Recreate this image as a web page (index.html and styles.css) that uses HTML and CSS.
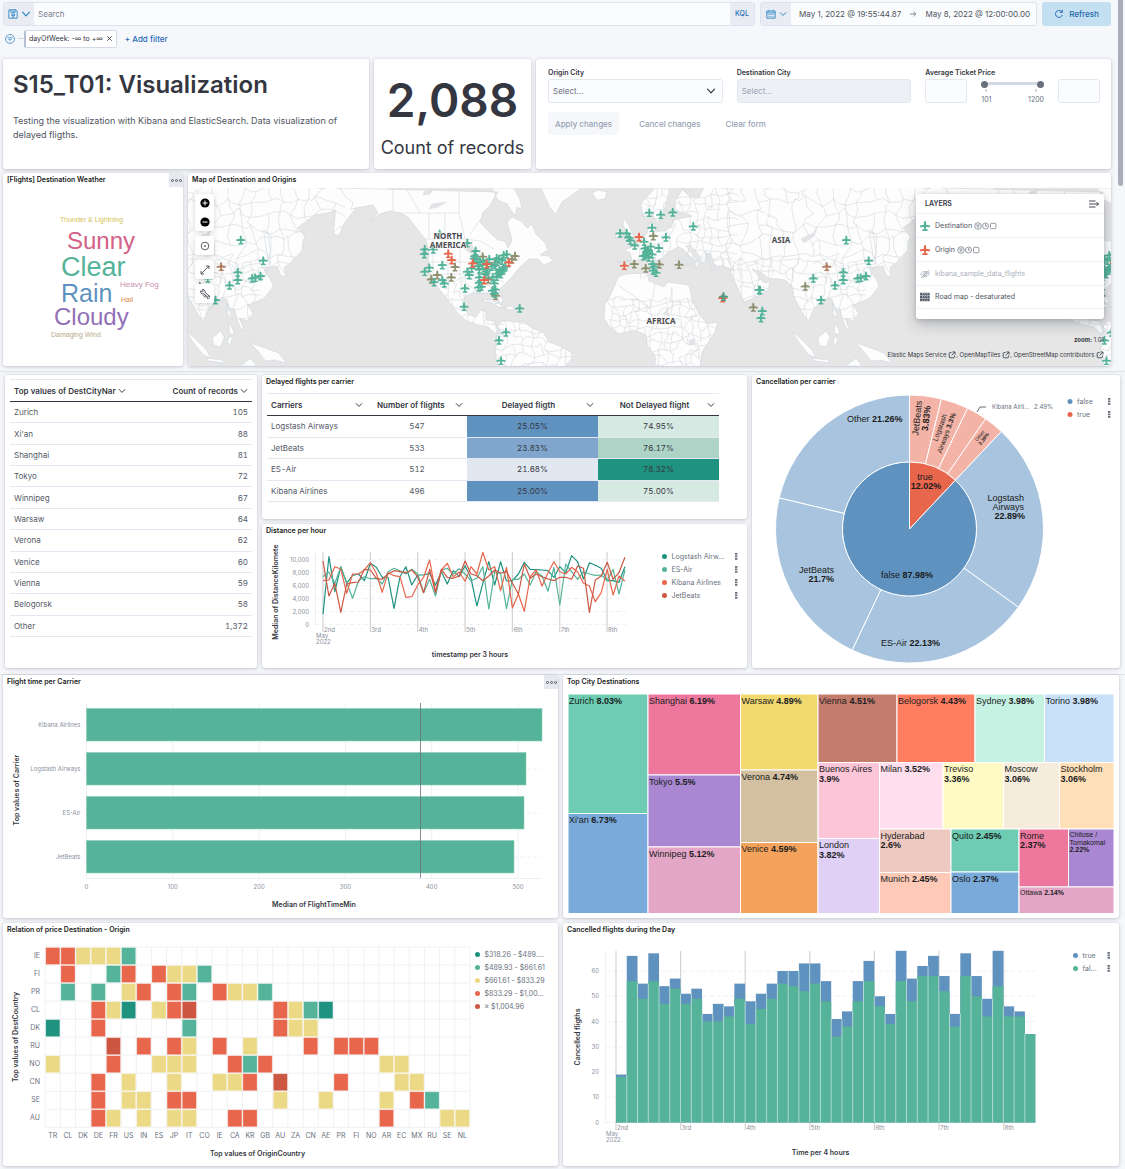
FILE: index.html
```
<!DOCTYPE html>
<html lang="en">
<head>
<meta charset="utf-8">
<meta name="viewport" content="width=device-width, initial-scale=1">
<title>S15_T01: Visualization</title>
<link rel="stylesheet" href="styles.css">
</head>
<body>
<svg class="defs" aria-hidden="true">
  <defs>
    <symbol id="chev" viewBox="0 0 10 10"><path d="M1.500 3.200 5 6.800l3.500-3.600" fill="none" stroke="currentColor" stroke-width="1.200" stroke-linecap="round" stroke-linejoin="round"/></symbol>
    <symbol id="plane" viewBox="-4.500 -4.500 9 9" overflow="visible"><path d="M0-4.500C.8-4.500 1-3.600 1-2.800V-1.200L4.500-.4V1.100L1 .9.7 2.600 2.400 3.200V4.400H-2.400V3.200L-.7 2.600-1 .9-4.500 1.100V-.4L-1-1.200V-2.800C-1-3.600-.8-4.500 0-4.500z"/></symbol>
    <symbol id="ext" viewBox="0 0 10 10"><path d="M4.500 2H2.500a1 1 0 0 0-1 1v4.500a1 1 0 0 0 1 1H7a1 1 0 0 0 1-1V5.500M5.500 1.200h3.300v3.300M8.500 1.500 4.500 5.500" fill="none" stroke="currentColor"/></symbol>
    <symbol id="marks" viewBox="0 0 23 8"><g fill="none" stroke="currentColor" stroke-width=".7"><circle cx="4" cy="4" r="3.300"/><path d="M2.200 3h3.600M2.700 4.200h2.600M3.400 5.400h1.200"/><circle cx="11.500" cy="4" r="3"/><path d="M11.500 2v2.200h1.700"/><rect x="16.500" y="1.300" width="5.400" height="5.400" rx="1"/></g></symbol>
  </defs>
</svg>
<div class="scroll-thumb"></div>

<header class="query-bar">
  <form class="search">
    <button type="button" class="addon" aria-label="Saved queries">
      <svg class="i10" viewBox="0 0 12 12"><path d="M1 1h8.500L11 2.500V11H1zM3.500 1v3h5V1M6.500 1.800v1.400M4.500 6h3.500v2H4.500zM6.200 8v3" fill="none" stroke="currentColor" stroke-width="1.100"/></svg>
      <svg class="i10"><use href="#chev"/></svg>
    </button>
    <input type="text" placeholder="Search" aria-label="Search">
    <button type="button" class="kql">KQL</button>
  </form>
  <div class="dates">
    <button type="button" class="addon" aria-label="Date quick select">
      <svg class="i10" viewBox="0 0 12 12"><path d="M1 2.500h10V11H1zM1 4.700h10M3.500 1v2M8.500 1v2M3 6.600h1.200M5.400 6.600h1.200M7.800 6.600H9M3 8.800h1.200M5.400 8.800h1.200M7.800 8.800H9" fill="none" stroke="currentColor" stroke-width="1.100"/></svg>
      <svg class="i8"><use href="#chev"/></svg>
    </button>
    <button type="button" class="date">May 1, 2022 @ 19:55:44.87</button>
    <svg class="i8 muted" viewBox="0 0 10 10"><path d="M1 5h7.500M5.500 2.200 8.500 5l-3 2.800" fill="none" stroke="currentColor"/></svg>
    <button type="button" class="date">May 8, 2022 @ 12:00:00.00</button>
  </div>
  <button type="button" class="refresh">
    <svg class="i10" viewBox="0 0 12 12"><path d="M10 7.200A4.200 4.200 0 1 1 8.700 2.700L10 4M10 1v3H7" fill="none" stroke="currentColor" stroke-width="1.100"/></svg>
    Refresh
  </button>
</header>
<div class="filters">
  <svg class="i10 blue" viewBox="0 0 12 12"><g fill="none" stroke="currentColor"><circle cx="6" cy="6" r="5.300"/><path d="M2.800 4.500h6.400M4 6.400h4M5.200 8.300h1.600"/></g></svg>
  <span class="dash"></span>
  <span class="pill">dayOfWeek: -∞ to +∞ <button type="button" aria-label="Remove filter"><svg class="i6" viewBox="0 0 8 8"><path d="m1.500 1.500 5 5m0-5-5 5" fill="none" stroke="currentColor"/></svg></button></span>
  <a href="#" class="add">+ Add filter</a>
</div>

<main>
  <section class="row row-intro">
    <article class="panel intro">
      <h1>S15_T01: Visualization</h1>
      <p>Testing the visualization with Kibana and ElasticSearch. Data visualization of delayed fligths.</p>
    </article>
    <article class="panel metric">
      <strong>2,088</strong>
      <span>Count of records</span>
    </article>
    <form class="panel controls">
      <div class="fields">
        <div class="field">
          <label for="origin">Origin City</label>
          <div class="select-wrap"><select id="origin"><option>Select...</option></select><svg class="i10"><use href="#chev"/></svg></div>
        </div>
        <div class="field">
          <label for="dest">Destination City</label>
          <select id="dest" disabled><option>Select...</option></select>
        </div>
        <div class="field">
          <label for="min-price">Average Ticket Price</label>
          <div class="range">
            <input type="text" id="min-price">
            <div class="slider">
              <div class="track"><input type="range" min="101" max="1200" value="101" aria-label="Lowest price"><input type="range" min="101" max="1200" value="1200" aria-label="Highest price"></div>
              <div class="ticks"><span>101</span><span>1200</span></div>
            </div>
            <input type="text" aria-label="Maximum price">
          </div>
        </div>
      </div>
      <div class="actions">
        <button type="button" class="apply" disabled>Apply changes</button>
        <button type="button" disabled>Cancel changes</button>
        <button type="button" disabled>Clear form</button>
      </div>
    </form>
  </section>

  <section class="row row-map">
    <article class="panel">
      <header><h2>[Flights] Destination Weather</h2><button type="button" class="opts" aria-label="Panel options"><i></i><i></i><i></i></button></header>
      <svg class="chart cloud" viewBox="3 188 180 177">
        <text x="60" y="222" font-size="7" fill="#d6bf57">Thunder &amp; Lightning</text>
        <text x="67" y="249" font-size="24" fill="#d36086">Sunny</text>
        <text x="61" y="276" font-size="27" fill="#54b399">Clear</text>
        <text x="61" y="302" font-size="25" fill="#6092c0">Rain</text>
        <text x="120" y="287" font-size="8" fill="#ca8eae">Heavy Fog</text>
        <text x="121" y="302" font-size="7" fill="#da8b45">Hail</text>
        <text x="54" y="325" font-size="24" fill="#9170b8">Cloudy</text>
        <text x="51" y="337" font-size="7" fill="#b9a888">Damaging Wind</text>
      </svg>
    </article>
    <article class="panel map-panel">
      <header><h2>Map of Destination and Origins</h2></header>
      <div class="map">
        <svg class="chart" id="map" viewBox="188 188 923 178"></svg>
        <div class="tools">
          <div class="tool zoom">
            <button type="button" aria-label="Zoom in"><svg class="i10" viewBox="0 0 10 10"><circle cx="5" cy="5" r="4.600"/><path d="M5 2.500v5M2.500 5h5" stroke="#fff"/></svg></button>
            <button type="button" aria-label="Zoom out"><svg class="i10" viewBox="0 0 10 10"><circle cx="5" cy="5" r="4.600"/><path d="M2.500 5h5" stroke="#fff"/></svg></button>
          </div>
          <button type="button" class="tool" aria-label="Fit to data"><svg class="i10" viewBox="0 0 10 10"><circle cx="5" cy="5" r="3.800" fill="none" stroke="currentColor" stroke-width=".8"/><circle cx="5" cy="5" r=".8"/></svg></button>
          <button type="button" class="tool" aria-label="Measure"><svg class="i10" viewBox="0 0 10 10"><path d="M1 9 9 1M6 1h3v3M1 6v3h3" fill="none" stroke="currentColor" stroke-width=".8"/></svg></button>
          <button type="button" class="tool" aria-label="Tools"><svg class="i10" viewBox="0 0 10 10"><path d="M.8 1.800 2.300 3 3.300 2 2.200.6A2.200 2.200 0 0 1 5 3.400L8.300 6.300A1 1 0 0 1 7 7.800L4 4.600A2.200 2.200 0 0 1 .8 1.800zM3 6.200 5.500 8.800M4.500 5.500 7 8.500M8.300 6.300A1.700 1.700 0 1 1 7 9.300" fill="none" stroke="currentColor" stroke-width=".8"/></svg></button>
        </div>
        <aside class="layers">
          <h3>LAYERS <svg class="i10" viewBox="0 0 10 10"><path d="M0 2h6.500M0 5h9.500M0 8h6.500M7.500 3l2 2-2 2" fill="none" stroke="currentColor" stroke-width=".9"/></svg></h3>
          <ul>
            <li><svg class="i10 green"><use href="#plane"/></svg>Destination <svg class="marks"><use href="#marks"/></svg></li>
            <li><svg class="i10 red"><use href="#plane"/></svg>Origin <svg class="marks"><use href="#marks"/></svg></li>
            <li class="off"><svg class="i10" viewBox="0 0 10 10"><path d="M.5 5C2.500 1.500 7.500 1.500 9.500 5 7.500 8.500 2.500 8.500.5 5zM1 9 9 1M2.500 9.200 9.500 2.500" fill="none" stroke="currentColor" stroke-width=".8"/><circle cx="5" cy="5" r="1.500" fill="none" stroke="currentColor" stroke-width=".8"/></svg>kibana_sample_data_flights</li>
            <li><svg class="i10" viewBox="0 0 10 10"><path d="M0 .8h9.600v8.400H0z" fill="#535966"/><path d="M0 3.500h10M0 6.400h10M2.400 1v8M4.800 1v8M7.200 1v8" stroke="#d5d8de" stroke-width=".8" stroke-dasharray="1.600 .8"/></svg>Road map - desaturated</li>
          </ul>
        </aside>
        <div class="credits">
          <div><b>zoom:</b> 1.01</div>
          <div><a href="#">Elastic Maps Service <svg class="i8"><use href="#ext"/></svg></a>, <a href="#">OpenMapTiles <svg class="i8"><use href="#ext"/></svg></a>, <a href="#">OpenStreetMap contributors <svg class="i8"><use href="#ext"/></svg></a></div>
        </div>
      </div>
    </article>
  </section>

  <section class="row row-tables">
    <article class="panel cities">
      <table class="grid">
        <thead><tr><th>Top values of DestCityNar <svg class="i8"><use href="#chev"/></svg></th><th>Count of records <svg class="i8"><use href="#chev"/></svg></th></tr></thead>
        <tbody>
          <tr><td>Zurich</td><td>105</td></tr>
          <tr><td>Xi'an</td><td>88</td></tr>
          <tr><td>Shanghai</td><td>81</td></tr>
          <tr><td>Tokyo</td><td>72</td></tr>
          <tr><td>Winnipeg</td><td>67</td></tr>
          <tr><td>Warsaw</td><td>64</td></tr>
          <tr><td>Verona</td><td>62</td></tr>
          <tr><td>Venice</td><td>60</td></tr>
          <tr><td>Vienna</td><td>59</td></tr>
          <tr><td>Belogorsk</td><td>58</td></tr>
          <tr><td>Other</td><td>1,372</td></tr>
        </tbody>
      </table>
    </article>
    <div class="stack">
      <article class="panel">
        <header><h2>Delayed flights per carrier</h2></header>
        <table class="grid delays">
          <colgroup><col class="c1"><col class="c2"><col class="c3"><col class="c4"></colgroup>
          <thead><tr><th><span>Carriers<svg class="i8"><use href="#chev"/></svg></span></th><th><span>Number of flights<svg class="i8"><use href="#chev"/></svg></span></th><th><span>Delayed fligth<svg class="i8"><use href="#chev"/></svg></span></th><th><span>Not Delayed flight<svg class="i8"><use href="#chev"/></svg></span></th></tr></thead>
          <tbody>
            <tr><td>Logstash Airways</td><td>547</td><td class="b3">25.05%</td><td class="g1">74.95%</td></tr>
            <tr><td>JetBeats</td><td>533</td><td class="b2">23.83%</td><td class="g2">76.17%</td></tr>
            <tr><td>ES-Air</td><td>512</td><td class="b1">21.68%</td><td class="g3">78.32%</td></tr>
            <tr><td>Kibana Airlines</td><td>496</td><td class="b3">25.00%</td><td class="g1">75.00%</td></tr>
          </tbody>
        </table>
      </article>
      <article class="panel">
        <header><h2>Distance per hour</h2></header>
        <svg class="chart" id="distance" viewBox="262 539 485 129"></svg>
      </article>
    </div>
    <article class="panel">
      <header><h2>Cancellation per carrier</h2></header>
      <svg class="chart" id="sunburst" viewBox="752 390 368 278"></svg>
    </article>
  </section>

  <section class="row row-charts">
    <article class="panel">
      <header><h2>Flight time per Carrier</h2><button type="button" class="opts" aria-label="Panel options"><i></i><i></i><i></i></button></header>
      <svg class="chart" id="flight-time" viewBox="3 690 555 228"></svg>
    </article>
    <article class="panel">
      <header><h2>Top City Destinations</h2></header>
      <svg class="chart" id="treemap" viewBox="563 690 556 228"></svg>
    </article>
    <article class="panel">
      <header><h2>Relation of price Destination - Origin</h2></header>
      <svg class="chart" id="heatmap" viewBox="3 938 555 228"></svg>
    </article>
    <article class="panel">
      <header><h2>Cancelled flights during the Day</h2></header>
      <svg class="chart" id="cancelled" viewBox="563 938 556 228"></svg>
    </article>
  </section>
</main>
<script src="charts.js"></script>
</body>
</html>
```
FILE: styles.css
```
* { box-sizing: border-box; }

body {
  margin: 0;
  background: #f6f7fb;
  color: #343741;
  font: 8px/12px Inter, "Liberation Sans", sans-serif;
}

h1, h2, h3, p, ul { margin: 0; padding: 0; }
button, input, select { font: inherit; color: inherit; margin: 0; }
button { border: 0; background: none; padding: 0; }
a { color: inherit; text-decoration: none; }
svg { display: block; flex: none; }

.defs { position: absolute; width: 0; height: 0; }
.i10 { width: 10px; height: 10px; }
.i8 { width: 8px; height: 8px; }
.i6 { width: 7px; height: 7px; }
.blue { color: #3d8fcb; }
.muted { color: #69707d; }
.green { fill: #54b399; }
.red { fill: #e7664c; }

.scroll-thumb {
  position: absolute;
  z-index: 5;
  top: 0;
  right: 2px;
  width: 5px;
  height: 186px;
  border-radius: 0 0 3px 3px;
  background: #a9aeb9;
}

/* query bar */
.query-bar {
  display: flex;
  gap: 5px;
  padding: 2px 14px 0 3px;
}
.search, .dates {
  display: flex;
  align-items: center;
  height: 24px;
  border: 1px solid #dde2ec;
  border-radius: 3px;
  background: #fbfcfe;
  overflow: hidden;
}
.search { flex: 1; }
.search input {
  flex: 1;
  height: 100%;
  border: 0;
  padding: 0 4px;
  background: none;
}
.search input::placeholder { color: #7b818d; opacity: 1; }
.addon, .kql {
  display: flex;
  align-items: center;
  justify-content: center;
  gap: 3px;
  height: 100%;
  background: #e9edf3;
  color: #2f86c6;
}
.addon { width: 30px; }
.kql { width: 24px; color: #2a6fb5; font-size: 7px; font-weight: 500; }
.dates { width: 277px; justify-content: space-between; padding-right: 6px; }
.date { color: #50545e; }
.refresh {
  display: flex;
  align-items: center;
  justify-content: center;
  gap: 5px;
  width: 69px;
  height: 24px;
  border-radius: 3px;
  background: #c5dff2;
  color: #2066a8;
  font-weight: 500;
}
.filters {
  display: flex;
  align-items: center;
  height: 33px;
  padding: 0 0 8px 5px;
}
.dash { width: 6px; height: 1px; margin-left: 3px; background: #d3dae6; }
.pill {
  display: flex;
  align-items: center;
  gap: 3px;
  height: 18px;
  padding: 0 3px;
  border: 1px solid #d3dae6;
  border-left: 2px solid #b5bdd0;
  border-radius: 2px;
  background: #fff;
  font-size: 7px;
  white-space: nowrap;
}
.add { margin-left: 8px; color: #1f69b3; font-weight: 500; }

/* dashboard */
.row { display: grid; gap: 5px; }
.row-intro { grid-template-columns: 366fr 157fr 575fr; padding: 0 14px 4px 3px; }
.row-map { grid-template-columns: 180fr 923fr; padding: 0 14px 5px 3px; }
.row-tables { grid-template-columns: 252fr 485fr 368fr; padding: 3px 5px 6px; border-top: 1px solid #dfe3eb; }
.row-charts { grid-template-columns: 555fr 556fr; padding: 0 6px 3px 3px; border-top: 1px solid #dfe3eb; }
.stack { display: grid; grid-template-rows: 1fr 1fr; gap: 5px; }
.panel {
  min-width: 0;
  border-radius: 3px;
  background: #fff;
  box-shadow: 0 1px 3px rgba(60, 65, 80, .2), 0 0 5px rgba(60, 65, 80, .12);
  overflow: hidden;
}
.panel > header {
  display: flex;
  justify-content: space-between;
  align-items: flex-start;
  height: 15px;
  padding-left: 4px;
}
h2 { color: #1a1c21; font-size: 7px; line-height: 14px; font-weight: 600; }
.opts {
  display: flex;
  align-items: center;
  justify-content: center;
  gap: 1px;
  width: 14px;
  height: 14px;
  background: #e6e8ed;
}
.opts i { width: 3px; height: 3px; border: 1px solid #535966; border-radius: 50%; }
.chart { width: 100%; height: auto; }

.intro { min-height: 110px; padding: 10px; }
h1 { font-size: 24px; line-height: 31px; font-weight: 600; }
.intro p { margin-top: 14px; color: #50545e; font-size: 9px; line-height: 14px; }
.metric {
  display: flex;
  flex-direction: column;
  align-items: center;
  padding-top: 15px;
  white-space: nowrap;
}
.metric strong { font-size: 46px; line-height: 52px; font-weight: 600; }
.metric span { margin-top: 10px; font-size: 18px; line-height: 24px; }

.controls { padding: 8px 11px 8px 12px; }
.fields { display: grid; grid-template-columns: repeat(3, 1fr); gap: 14px; }
.field label { display: block; color: #343741; font-size: 7px; font-weight: 600; line-height: 12px; }
.field select, .range > input {
  width: 100%;
  height: 24px;
  border: 1px solid #e3e8f0;
  border-radius: 3px;
  padding: 0 4px;
  background: #fbfcfe;
  color: #69707d;
  appearance: none;
}
.field select:disabled { background: #edf0f5; color: #98a2b3; opacity: 1; }
.select-wrap { display: grid; align-items: center; }
.select-wrap > * { grid-area: 1 / 1; }
.select-wrap svg { justify-self: end; margin-right: 7px; pointer-events: none; }
.range { display: grid; grid-template-columns: 42px 1fr 42px; gap: 14px; }
.slider { padding-top: 2px; }
.track { position: relative; height: 6px; }
.track::before { content: ""; position: absolute; left: 7px; right: 7px; top: 1px; height: 3px; background: #d3dae6; }
.track input {
  position: absolute;
  inset: 0;
  width: 100%;
  height: 6px;
  appearance: none;
  background: none;
  pointer-events: none;
}
.track input::-webkit-slider-thumb {
  appearance: none;
  width: 7px;
  height: 7px;
  border-radius: 50%;
  background: #69707d;
  pointer-events: auto;
}
.ticks { display: flex; justify-content: space-between; margin-top: 2px; color: #69707d; font-size: 7px; line-height: 10px; }
.ticks span { display: flex; flex-direction: column; align-items: center; }
.ticks span::before { content: ""; width: 2px; height: 3px; margin-bottom: 3px; background: #d3dae6; }
.actions { display: flex; align-items: center; margin-top: 7px; color: #98a2b3; }
.actions button { height: 23px; padding: 0 5px; margin-right: 15px; border-radius: 3px; font-weight: 500; }
.actions .apply { padding: 0 7px; background: #f5f7fa; }

/* word cloud */
.cloud text { font-family: "Liberation Sans", Arial, sans-serif; }

/* map overlays */
.map { position: relative; }
.map text { font-family: "Noto Sans", sans-serif; font-weight: 700; font-size: 8px; fill: #4a4a50; stroke: #fff; stroke-width: 1; paint-order: stroke; text-anchor: middle; }
.tools { position: absolute; left: 7px; top: 6px; display: flex; flex-direction: column; gap: 5px; }
.tool {
  display: flex;
  align-items: center;
  justify-content: center;
  width: 19px;
  height: 19px;
  border-radius: 3px;
  background: #fff;
  box-shadow: 0 1px 5px rgba(60, 65, 80, .22);
}
.zoom { flex-direction: column; gap: 9px; height: 37px; }
.layers {
  position: absolute;
  right: 7px;
  top: 6px;
  width: 188px;
  padding-bottom: 10px;
  border-radius: 3px;
  background: #fff;
  box-shadow: 0 5px 14px rgba(60, 65, 80, .3), 0 1px 4px rgba(60, 65, 80, .2);
}
.layers h3 {
  display: flex;
  justify-content: space-between;
  align-items: center;
  height: 19px;
  padding: 0 5px 0 9px;
  font-size: 7px;
  font-weight: 600;
}
.layers ul { list-style: none; }
.layers li {
  display: flex;
  align-items: center;
  gap: 4px;
  height: 24px;
  padding-left: 4px;
  border-top: 1px solid #f0f2f6;
  color: #50545e;
  font-size: 7px;
}
.layers li:last-child { border-bottom: 1px solid #f0f2f6; }
.layers li > svg:first-child { margin-right: 1px; }
.layers .off { color: #abb1bd; }
.layers .marks { width: 23px; height: 8px; color: #69707d; margin-left: -2px; }
.credits {
  position: absolute;
  right: 7px;
  bottom: 4px;
  color: #343741;
  font-size: 6px;
  line-height: 15px;
  text-align: right;
}
.credits svg { display: inline-block; vertical-align: -2px; }

/* tables */
.grid { border-collapse: collapse; color: #535966; table-layout: fixed; font-variant-numeric: tabular-nums; }
.grid th, .grid td { padding: 0 4px; border-bottom: 1px solid #e3e8f2; font-size: 8px; }
.grid th { border-top: 1px solid #e3e8f2; border-bottom: 1px solid #343741; color: #343741; font-weight: 600; text-align: left; white-space: nowrap; }
.grid th svg { display: inline-block; vertical-align: -1px; }
.cities { padding: 4px 5px 0; }
.cities table { width: 100%; height: 258px; }
.cities th { height: 22px; }
.cities tr > :last-child { text-align: right; }
.delays { width: 452px; max-width: 100%; height: 109px; margin: 3px 0 0 5px; }
.delays th span { display: flex; align-items: center; justify-content: space-between; }
.delays th { height: 22px; }
.delays th:nth-child(n+3) span::before { content: ""; }
.delays th, .delays td:nth-child(n+2) { text-align: center; }
.delays th:nth-child(2) { padding-left: 10px; }
.delays td:nth-child(n+3) { color: #343741; }
.c1, .c2 { width: 100px; }
.c3 { width: 131px; }
.c4 { width: 121px; }
.b1 { background: #e1e8f2; }
.b2 { background: #81a6cd; }
.b3 { background: #6092c0; }
.g1 { background: #d7e9e3; }
.g2 { background: #aed4c8; }
.g3 { background: #209280; }

/* chart text */
.chart { font-family: Inter, sans-serif; }
.tick { fill: #8a909c; font-size: 6px; }
.label { fill: #69707d; font-size: 7px; }
.axis { fill: #343741; font-size: 7px; font-weight: 600; }
.mid { text-anchor: middle; }
.end { text-anchor: end; }
.slice { font-family: "Liberation Sans", Arial, sans-serif; font-size: 9px; fill: #1a1c21; }
.slice .b { font-weight: 700; }
.small { font-size: 7px; }
.tiny { font-size: 6px; }
.turned { text-anchor: end; }
.turned.s7 { font-size: 7px; }
.turned.s5 { font-size: 5px; }
```
FILE: charts.js
```
const put = (id, parts) => { document.getElementById(id).innerHTML = parts.join(''); };
const text = (x, y, s, cls, extra = '') => `<text x="${x}" y="${y}" class="${cls}" ${extra}>${s}</text>`;
const rect = (x, y, w, h, fill, extra = '') => `<rect x="${x}" y="${y}" width="${w}" height="${h}" fill="${fill}" ${extra}/>`;
const line = (x1, y1, x2, y2, stroke, extra = '') => `<line x1="${x1}" y1="${y1}" x2="${x2}" y2="${y2}" stroke="${stroke}" ${extra}/>`;
const side = (x, y, s) => text(0, 0, s, 'axis mid', `transform="translate(${x} ${y}) rotate(-90)"`);
const menuDots = (x, y) => [-2.5, 0, 2.5].map(d => rect(x - 1, y + d - 1, 2.4, 1.8, '#69707d')).join('');
const legend = (x, y, step, items, menuX) => items.map(([name, color], i) =>
  `<circle cx="${x}" cy="${y + i * step}" r="2.500" fill="${color}"/>` +
  text(x + 7, y + i * step + 2, name, 'label') + (menuX ? menuDots(menuX, y + i * step) : '')).join('');

/* world map */
const land = [
  'M340 188l5 8 8 7-2 6 10-2 12-2 5 8-8 8 10-7 10-3 10 2 8 4 10 13 8 10 3 12-1 14 4 11 7 12 9 11 8 11 0 0 9 9 9 4 14 3 7 6 9 2 -8-9-1-5-9-1 0-8-5-2-5 7-7-2-5-7 0-11 8-4 14 0 8 0 7 12 2-4-4-11 12-12 8-10 10-9 9 0 6 6 9-4-4-5-9-1 8-5-3-7-9-9-4-10-5 4-6-7-9-4-5 5 3 10 2 9-4 7-3-7-7-1-10-9-8-9 3-10 7-6 5-10 3-4z',
  'M492 188h22l6 12 2 10-5-3-2 9-8-12-9-4z',
  'M541 188l9 20 6 6 6-12 14-10 6-4z',
  'M592 193l6-3 9 2-2 7-8 1z',
  'M498 325l6-5 10 2 10 0 8 6 12 5 5 9 13 5 9 5 1 6-5 6-3 5h-64l-4-11-1-9 2-11z',
  'M481 301l7-2 10 4 7 4-6 0-8-4zM505 307l6-1 4 3-6 1z',
  'M624 218l4 6 4 8 2 6-9 2 2-8-4-7zM617 230l5 1-1 6-6 1z',
  'M615 285l3-8 8-3 21-1 2 8 15 6 4-5 20 3 2 3 2 12 6 12 9 12 11-2-3 10-13 20-2 16h-46l2-10-9-13-1-10-12-5-15 4-10-8-5-8 1-14 6-10z',
  'M641 203l14-15h15l-4 16-3 10-5 9-3-3-3-6-9 3z',
  'M617 262l11-1 4-1-2-7-5-3 9-4 6-5 7-8 2-10 5 0 1 8 10 0 7-5 1-6 19-4-10-3-7-4 0-8 7-12 8 8 9 0 5-10h292l-2 2-17 7-14 10-13 17-6 13-5-3 2-23-8 3-13 2-17 13 7 8-2 14-12 13-6 4 1 10-5-2-3-9-14 2 5 7 5 11-9 12-9 4-8 3 6 9-6 7-8-3 5 13-4-3-4-10-2-9-5-1-3-9-5-1-7 4-8 10-3 10-7-10-8-15-3-12-6-5-17-2-7-6-9-3 6 6 5 7 7 1-2 7-12 7-12 5-10-22-5-12-12-2-8-5-4-10 1 9-4 4-4-10-8-9-4 1 7 9 6 7-3 6-3-9-10-10-5-2-12 7-6 6-9 1-7-1z',
  'M869 230l4 2 3 20-2 8-2-10zM865 262l8-3 3 4-7 3zM864 268l8-1 0 8-10 7-8 1 2-4 8-3z',
  'M792 332l6 4 14 14 4 8-7-3-9-11zM818 338l8-7 4 6-4 10-7-2zM812 358l16 2 2 3-16-2zM834 322l4 6 2 6-5 0zM832 303l3 7 3 8-5-4zM834 338l4-2-2 9-3-2zM856 343l12 4 16 6 8 10-12-3-9 1-6-8zM846 366l10-8 6 8z'
];
const water = 'M424 192l9-3-3 5-7 1zM432 204l14-2-8 5-9 2zM461 246l8-3 5 5 4 8-5-1-7-5zM678 258l8-3 12 6-6 5-14-2zM706 253l5 0 2 8 3 9-5 1-2-10zM801 239l12-6 4-5-3 8-10 7zM681 188l6 5 8-5zM665 314l2-6 2 8zM689 340l5-1 0 6-5 0z';

const seeded = seed => () => (seed = (seed * 16807) % 2147483647) / 2147483647;
function borders(x0, y0, w, h, cell, seed, skip) {
  const rnd = seeded(seed), cols = Math.ceil(w / cell), rows = Math.ceil(h / cell), p = [];
  for (let r = 0; r <= rows; r++) p.push(Array.from({ length: cols + 1 }, (_, c) =>
    [x0 + (c + (rnd() - .5) * .9) * cell, y0 + (r + (rnd() - .5) * .9) * cell]));
  let d = '';
  const join = (a, b) => {
    if (rnd() < skip) return;
    const mx = (a[0] + b[0]) / 2 + (rnd() - .5) * cell * .5, my = (a[1] + b[1]) / 2 + (rnd() - .5) * cell * .5;
    d += `M${a[0].toFixed(1)} ${a[1].toFixed(1)}L${mx.toFixed(1)} ${my.toFixed(1)} ${b[0].toFixed(1)} ${b[1].toFixed(1)}`;
  };
  for (let r = 0; r < rows; r++) for (let c = 0; c < cols; c++) {
    join(p[r][c], p[r][c + 1]);
    join(p[r][c], p[r + 1][c]);
  }
  return d;
}
const lines = borders(610, 300, 105, 68, 7, 11, .15) + borders(640, 188, 90, 85, 8, 5, .15) + borders(730, 188, 215, 80, 13, 23, .15) +
  borders(715, 262, 145, 70, 9, 31, .15) + borders(495, 320, 80, 50, 9, 47, .2) + borders(440, 280, 60, 45, 7, 59, .3) +
  'M618 285l20 14 10 9 22-6 2-14M620 300l18-1M672 287v22M655 284l-4 22M672 302h20' +
  'M393 188v25M393 213h66v-25M429 213v26M445 213v26M459 213l6 26M424 239h42l14 2 14 8M433 239v44M448 249v38M460 239v45M425 262h66M440 274h60M472 240v40M480 250v35M488 255v32M406 188l14 25M470 234l10-14';

const airports = {
  g: [[179,192],[262,219],[134,238],[160,238],[133,252],[148,293],[134,305],[187,285],[162,336],[187,330],[193,340],[255,355],[252,410],[419,415],[378,487],[357,511],[363,572],[287,243],[284,258],[290,268],[300,275],[328,268],[350,265],[380,253],[371,256],[335,290],[275,295],[298,298],[322,298],[262,305],[268,315],[298,322],[316,312],[298,338],[296,352],[304,350],[343,340],[350,320],[338,322],[362,312],[358,300],[368,302],[376,290],[345,358],[337,362],[366,272],[357,268],[308,284],[345,285],[355,310],[283,265],[294,288],[318,305],[310,275],[370,295],[344,370],[360,305],
    [720,190],[740,190],[751,211],[747,203],[792,215],[764,226],[808,128],[842,134],[878,127],[816,173],[858,202],[940,169],[812,230],[836,234],[795,235],[800,245],[806,250],[796,256],[806,262],[816,253],[790,258],[804,240],[818,282],[822,290],[820,302],[828,308],[1137,360],
    [1399,210],[1466,272],[1390,307],[1390,330],[1433,325],[1442,323],[1458,318],[1365,346],[1300,325],[1323,390],[1140,360],[1147,423],[1143,444]],
  o: [[154,328],[172,315],[214,322],[225,291],[308,260],[405,258],[396,268],[345,278],[325,328],[347,377],[763,282],[797,295],[820,198],[838,283],[897,284],[1276,349],[1120,412]],
  r: [[205,251],[215,270],[386,277],[278,280],[320,282],[313,330],[777,201],[733,287],[1028,384]],
  b: [[1340,290]]
};
const planeColor = { r: '#e7664c', o: '#8f9070', b: '#b07a5c', g: '#54b399' };
const planes = ['o', 'b', 'g', 'r'].map(k => airports[k].map(([x, y]) =>
  `<use href="#plane" x="${(380 + x / 3 - 4.5).toFixed(1)}" y="${(170 + y / 3 - 4.5).toFixed(1)}" width="9" height="9" fill="${planeColor[k]}"/>`).join('')).join('') +
  '<use href="#plane" x="719" y="292" width="9" height="9" fill="#4d9d86"/>';
put('map', [
  rect(188, 188, 923, 178, '#e6e6e6'),
  `<defs><clipPath id="land-clip"><path d="${land.join('')}"/></clipPath><g id="world"><path d="${land.join('')}" fill="#fdfdfd" stroke="#cfd6de" stroke-width=".6"/>
   <path d="${lines}" clip-path="url(#land-clip)" fill="none" stroke="#cdd0d5" stroke-width=".5"/><path d="${water}" fill="#e3e4e6" stroke="#cfd6de" stroke-width=".4"/></g><g id="planes">${planes}</g></defs>`,
  ...[-605.5, 0, 605.5].map(dx => `<use href="#world" x="${dx}"/>`),
  ...[-605.5, 0, 605.5].map(dx => `<use href="#planes" x="${dx}"/>`),
  text(448, 239, 'NORTH', ''), text(448, 248, 'AMERICA', ''), text(661, 324, 'AFRICA', ''), text(781, 243, 'ASIA', '')
]);

/* distance per hour: four series, one point every three hours */
const series = [
  ['#209280', [732,560,665,590,640,616,612,632,580,592,622,622,715,620,590,645,615,615,610,645,605,642,602,620,587,625,708,640,575,645,575,633,632,612,577,598,599,600,602,622,590,608,557,575,627,578,586,595,632,632,637,590]],
  ['#54b399', [620,606,640,592,638,685,632,620,626,625,642,605,595,602,612,598,612,668,628,678,600,595,612,596,612,632,625,590,717,605,610,716,628,628,612,645,605,618,664,592,705,582,605,628,605,612,616,615,632,598,672,600]],
  ['#e7664c', [632,630,590,597,670,612,612,600,578,610,667,608,617,620,682,680,645,622,570,665,600,580,620,606,634,590,612,547,600,590,662,592,714,672,724,620,600,648,608,575,605,612,592,605,640,648,695,668,598,675,618,634]],
  ['#cc5642', [573,678,640,727,642,638,636,598,600,625,628,612,602,605,608,600,620,668,598,668,598,622,625,618,573,612,617,632,618,600,610,604,640,672,582,625,612,620,627,632,622,622,628,588,595,727,630,618,577,628,608,562]]
];
const dayNames = ['2nd', '3rd', '4th', '5th', '6th', '7th', '8th'];
put('distance', [
  ...[0, 2, 4, 6, 8, 10].map(k => line(315, 624.5 - k * 6.47, 626, 624.5 - k * 6.47, '#eef0f4', 'stroke-dasharray="4 3"') +
    text(309, 627 - k * 6.47, k ? k + ',000' : '0', 'tick end')),
  line(315.5, 552, 315.5, 625, '#eef0f4'),
  ...dayNames.map((d, i) => line(323 + i * 47.35, 552, 323 + i * 47.35, 632, '#d2d3d6', 'stroke-width="1.200"') + text(324 + i * 47.35, 632, d, 'tick')),
  text(316, 638, 'May', 'tick'), text(316, 644, '2022', 'tick'),
  ...series.map(([c, v]) => `<polyline fill="none" stroke="${c}" stroke-width="1.200" stroke-linejoin="round" points="${v.map((y, i) => (323 + i * 5.92).toFixed(1) + ',' + (370 + y / 3).toFixed(1)).join(' ')}"/>`),
  side(278, 592, 'Median of DistanceKilomete'),
  text(470, 657, 'timestamp per 3 hours', 'axis mid'),
  legend(664.5, 556.5, 13, [['Logstash Airw...', '#209280'], ['ES-Air', '#54b399'], ['Kibana Airlines', '#e7664c'], ['JetBeats', '#cc5642']], 736)
]);

/* cancellations: carriers around the cancelled / not cancelled split */
const cx = 909.5, cy = 529;
function wedge(r0, r1, from, to, fill) {
  const at = (r, p) => { const a = p / 100 * 2 * Math.PI; return (cx + r * Math.sin(a)).toFixed(2) + ' ' + (cy - r * Math.cos(a)).toFixed(2); };
  const big = to - from > 50 ? 1 : 0;
  return `<path d="M${at(r0, from)}L${at(r1, from)}A${r1} ${r1} 0 ${big} 1 ${at(r1, to)}L${at(r0, to)}A${r0} ${r0} 0 ${big} 0 ${at(r0, from)}z" fill="${fill}" stroke="#fff" stroke-width="1"/>`;
}
const wedges = [];
let at = 0;
[[3.83, '#f3b3a6'], [3.3, '#f3b3a6'], [2.49, '#f3b3a6'], [2.4, '#f3b3a6'], [22.89, '#a9c4de'], [22.13, '#a9c4de'], [21.7, '#a9c4de'], [21.26, '#a9c4de']]
  .forEach(([share, fill]) => { wedges.push(wedge(67, 134, at, at + share, fill)); at += share; });
const turned = (x, y, deg, size, rows) => `<g class="slice turned ${size}" transform="translate(${x} ${y}) rotate(${deg})">${rows}</g>`;
put('sunburst', [
  ...wedges, wedge(0, 67, 0, 12.02, '#e7664c'), wedge(0, 67, 12.02, 100, '#6092c0'),
  text(902.5, 422, 'Other <tspan class="b">21.26%</tspan>', 'slice end'),
  text(1024, 501, 'Logstash', 'slice end'), text(1024, 510, 'Airways', 'slice end'), text(1025, 519, '22.89%', 'slice end', 'font-weight="700"'),
  text(881, 646, 'ES-Air <tspan class="b">22.13%</tspan>', 'slice'),
  text(834, 573, 'JetBeats', 'slice end'), text(834, 582, '21.7%', 'slice end', 'font-weight="700"'),
  text(881, 578, 'false <tspan class="b">87.98%</tspan>', 'slice'),
  text(925, 480, 'true', 'slice mid'), text(926, 488.5, '12.02%', 'slice mid', 'font-weight="700"'),
  turned(922, 401, -84, '', '<text x="0" y="0">JetBeats</text><text x="-4" y="9" font-weight="700">3.83%</text>'),
  turned(947, 415, -70, 's7', '<text x="0" y="0">Logstash</text><text x="4" y="8">Airways <tspan class="b">3.3%</tspan></text>'),
  turned(985, 432, -52, 's5', '<text x="0" y="0">Other</text><text x="1" y="5" font-weight="700">2.39%</text>'),
  '<path d="M977 412l3-5h6" fill="none" stroke="#69707d"/>',
  text(992, 409, 'Kibana Airli...', 'label tiny'), text(1034, 409, '2.49%', 'label tiny'),
  legend(1070, 401.5, 13, [['false', '#6092c0'], ['true', '#e7664c']], 1109)
]);

/* flight time */
put('flight-time', [
  ...[0, 100, 200, 300, 400, 500].map(v => line(86.5 + v * .863, 703, 86.5 + v * .863, 878, '#eef0f4') + text(86.5 + v * .863, 889, v, 'tick mid')),
  ...[['Kibana Airlines', 542], ['Logstash Airways', 526], ['ES-Air', 524], ['JetBeats', 514]].map(([name, x], i) =>
    line(86, 725 + i * 44, 542, 725 + i * 44, '#eef0f4', 'stroke-dasharray="4 3"') +
    rect(86.5, 708.5 + i * 44, x - 86.5, 32.5, '#54b399', 'stroke="#8ecbb9" stroke-width=".6"') + text(80.5, 727 + i * 44, name, 'tick end')),
  line(86, 878.5, 542, 878.5, '#eef0f4'), line(420.5, 703, 420.5, 878, '#69707d', 'stroke-width=".8"'),
  side(19, 790, 'Top values of Carrier'), text(314, 906.5, 'Median of FlightTimeMin', 'axis mid')
]);

/* top destinations: name, share, x, y, right, bottom, colour, two rows */
const tiles = [
  ['Zurich','8.03%',568,694,648,813.5,'#6dccb1'],["Xi'an",'6.73%',568,813.5,648,913.5,'#79aad9'],
  ['Shanghai','6.19%',648,694,740.5,775,'#ee789d'],['Tokyo','5.5%',648,775,740.5,847,'#a987d1'],['Winnipeg','5.12%',648,847,740.5,913.5,'#e4a6c7'],
  ['Warsaw','4.89%',740.5,694,818,770,'#f1d86f'],['Verona','4.74%',740.5,770,818,842.5,'#d2c0a0'],['Venice','4.59%',740.5,842.5,818,913.5,'#f5a35c'],
  ['Vienna','4.51%',818,694,897,762.5,'#c47c6c'],['Belogorsk','4.43%',897,694,975,762.5,'#ff7e62'],['Sydney','3.98%',975,694,1044.5,762.5,'#c5f2e3'],['Torino','3.98%',1044.5,694,1114,762.5,'#c9e0f9'],
  ['Buenos Aires','3.9%',818,762.5,879.5,838.5,'#fcc5d8',1],['London','3.82%',818,838.5,879.5,913.5,'#e0d0f5',1],
  ['Milan','3.52%',879.5,762.5,943,829,'#ffdeee'],['Treviso','3.36%',943,762.5,1003.5,829,'#fff9c4',1],['Moscow','3.06%',1003.5,762.5,1059.5,829,'#f5ecdb',1],['Stockholm','3.06%',1059.5,762.5,1114,829,'#ffdfb8',1],
  ['Hyderabad','2.6%',879.5,829,951,872.5,'#eec9c1',1],['Munich','2.45%',879.5,872.5,951,913.5,'#ffc9b8'],
  ['Quito','2.45%',951,829,1019,872,'#6dccb1'],['Oslo','2.37%',951,872,1019,913.5,'#79aad9'],
  ['Rome','2.37%',1019,829,1068.5,887,'#ee789d',1],['','',1068.5,829,1114,887,'#a987d1'],['','',1019,887,1114,913.5,'#e4a6c7']
];
put('treemap', [
  ...tiles.map(([name, share, x, y, r, b, fill, two]) => rect(x, y, r - x, b - y, fill, 'stroke="#fff" stroke-width="1"') +
    (two ? text(x + 1, y + 9.5, name, 'slice') + text(x + 1, y + 19, share, 'slice', 'font-weight="700"')
      : text(x + 1, y + 9.5, `${name} <tspan class="b">${share}</tspan>`, 'slice'))),
  text(1069.5, 837, 'Chitose /', 'slice small'), text(1069.5, 844.5, 'Tomakomai', 'slice small'), text(1069.5, 852, '2.22%', 'slice small', 'font-weight="700"'),
  text(1020, 895, 'Ottawa <tspan class="b">2.14%</tspan>', 'slice small')
]);

/* price heatmap, one digit per price band */
const bands = { 1: '#209280', 2: '#54b399', 3: '#ecd985', 4: '#e7664c', 5: '#cc5642' };
const origins = 'TR CL DK DE FR US IN ES JP IT CO IE CA KR GB AU ZA CN AE PR FI NO AR EC MX RU SE NL'.split(' ');
const prices = { IE: '443332', FI: '.4..24.4332', PR: '.2.2.34.42.4332', CL: '...431.345.....4321', DK: '1..4.....2.....433', RU: '....5.4.43.4.3...4.444',
  NO: '3...4..333..424.......33', CN: '...4.3..3..334.5...4...33', SE: '...4.33.44.....3..3...3.42', AU: '...43.3.33..44........4...33' };
const cw = 15.17, ch = 18.03, hx = 45.2, hy = 947;
put('heatmap', [
  ...Array.from({ length: 29 }, (_, i) => line(hx + i * cw, hy, hx + i * cw, hy + 10 * ch, '#f0f1f5')),
  ...Array.from({ length: 11 }, (_, i) => line(hx, hy + i * ch, hx + 28 * cw, hy + i * ch, '#f0f1f5')),
  ...origins.map((o, i) => text((hx + (i + .5) * cw).toFixed(1), 1137.5, o, 'label mid')),
  ...Object.entries(prices).map(([dest, row], r) => text(40, (hy + (r + .5) * ch + 2).toFixed(1), dest, 'label end') +
    [...row].map((p, c) => p === '.' ? '' : rect((hx + c * cw + .5).toFixed(2), (hy + r * ch + .5).toFixed(2), cw - 1, ch - 1, bands[p], 'stroke="#fff" stroke-opacity=".4" stroke-width=".8"')).join('')),
  side(18, 1037, 'Top values of DestCountry'), text(257.5, 1156, 'Top values of OriginCountry', 'axis mid'),
  legend(477.5, 954.5, 13, [['$318.26 - $489....', '#209280'], ['$489.93 - $661.61', '#54b399'], ['$661.61 - $833.29', '#ecd985'], ['$833.29 - $1,00...', '#e7664c'], ['≥ $1,004.96', '#cc5642']])
]);

/* flights every four hours: total / not cancelled */
const totals = [19,66,55,67,54,57,51,53,43,47,46,55,48,51,55,60,60,63,63,56,41,44,56,64,50,43,68,57,62,66,58,43,67,58,49,68,46,44,35];
const kept = [18,56,49,56,47,53,47,49,40,40,42,49,39,45,49,55,54,52,55,48,34,38,48,56,46,39,56,48,58,58,52,38,58,50,42,54,42,42,35];
const bw = 10.76, bx = 616, by = 1122.5, unit = 2.525;
put('cancelled', [
  ...[0, 10, 20, 30, 40, 50, 60].map(v => line(605, by - v * unit, 1035, by - v * unit, '#eef0f4', 'stroke-dasharray="4 3"') + text(599, by - v * unit + 2, v, 'tick end')),
  line(605.5, 951, 605.5, 1122, '#eef0f4'),
  ...dayNames.map((d, i) => line(bx + i * 64.6, 951, bx + i * 64.6, 1130, '#d2d3d6', 'stroke-width="1.200"') + text(bx + 1 + i * 64.6, 1130, d, 'tick')),
  text(606, 1136, 'May', 'tick'), text(606, 1142, '2022', 'tick'),
  ...totals.map((t, i) => rect((bx + i * bw).toFixed(2), by - t * unit, bw, t * unit, '#6092c0') +
    rect((bx + i * bw).toFixed(2), by - kept[i] * unit, bw, kept[i] * unit, '#54b399')),
  ...totals.map((t, i) => line((bx + (i + 1) * bw).toFixed(2), by - Math.min(t, totals[i + 1] || t) * unit, (bx + (i + 1) * bw).toFixed(2), by, '#c4e4da', 'stroke-width=".8"')),
  side(580, 1037, 'Cancelled fligths'), text(820.5, 1154.5, 'Time per 4 hours', 'axis mid'),
  legend(1075.5, 955.5, 13, [['true', '#6092c0'], ['fal...', '#54b399']], 1108.5)
]);
```
